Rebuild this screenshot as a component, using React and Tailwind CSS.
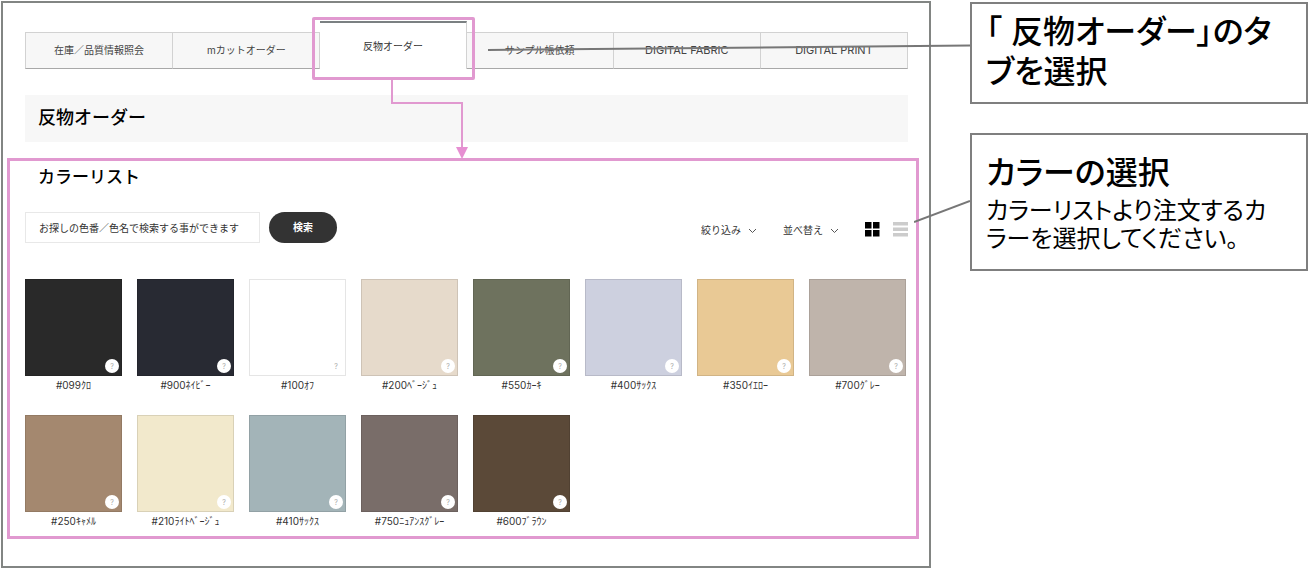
import React, { useState } from 'react';
import clsx from 'clsx';

const tabs = [
    { label: '在庫／品質情報照会' },
    { label: 'mカットオーダー' },
    { label: '反物オーダー' },
    { label: 'サンプル帳依頼' },
    { label: 'DIGITAL FABRIC', latin: true },
    { label: 'DIGITAL PRINT', latin: true },
];

const colors = [
    { name: '#099ｸﾛ', hex: '#292929' },
    { name: '#900ﾈｲﾋﾞｰ', hex: '#282a33' },
    { name: '#100ｵﾌ', hex: '#ffffff' },
    { name: '#200ﾍﾞｰｼﾞｭ', hex: '#e6dacb' },
    { name: '#550ｶｰｷ', hex: '#6e725e' },
    { name: '#400ｻｯｸｽ', hex: '#cdd0df' },
    { name: '#350ｲｴﾛｰ', hex: '#e9c995' },
    { name: '#700ｸﾞﾚｰ', hex: '#bfb4ab' },
    { name: '#250ｷｬﾒﾙ', hex: '#a4886f' },
    { name: '#210ﾗｲﾄﾍﾞｰｼﾞｭ', hex: '#f2e9cc' },
    { name: '#410ｻｯｸｽ', hex: '#a3b4b8' },
    { name: '#750ﾆｭｱﾝｽｸﾞﾚｰ', hex: '#796d69' },
    { name: '#600ﾌﾞﾗｳﾝ', hex: '#5b4938' },
];

// Moldura rosa e seta que ligam a aba ativa à lista de cores
const TabHighlight = () => (
    <>
        <span className="pointer-events-none absolute -inset-x-2 -top-1 -bottom-[11px] rounded-[2px] border-3 border-[#e199d0]" />
        <svg className="pointer-events-none absolute top-full left-1/2 z-10 mt-[11px] overflow-visible" width="80" height="80" fill="none">
            <path d="M-1 0V23H69V69" stroke="#e199d0" strokeWidth="2" />
            <path d="M63 67H75L69 79Z" fill="#e68fd2" />
        </svg>
    </>
);

const Tabs = ({ active, onSelect }) => (
    <nav className="mr-[21px] ml-[22px] flex h-12 items-end">
        {tabs.map(({ label, latin }) =>
            label === active ? (
                <div key={label} className="relative h-12 flex-1">
                    <button
                        type="button"
                        className="h-full w-full border-t-2 border-r border-t-[#7b8082] border-r-[#d2d2d2] bg-white text-[10px] text-[#333]"
                    >
                        {label}
                    </button>
                    <TabHighlight />
                </div>
            ) : (
                <button
                    key={label}
                    type="button"
                    onClick={() => onSelect(label)}
                    className={clsx(
                        'h-[37px] flex-1 border border-l-0 border-[#d2d2d2] border-b-[#a8a8a8] bg-[#f7f7f7] text-[#444] first:border-l',
                        latin ? 'text-[11px]' : 'text-[10px]'
                    )}
                >
                    {label}
                </button>
            )
        )}
    </nav>
);

const FilterSelect = ({ label }) => (
    <div className="relative w-14">
        <select aria-label={label} className="block w-full appearance-none bg-transparent text-[10px] leading-5 text-[#333]">
            <option>{label}</option>
        </select>
        <svg className="pointer-events-none absolute top-2 right-0 h-[6px] w-[9px]" viewBox="0 0 9 6" fill="none" stroke="#555">
            <path d="M1 1L4.5 4.5L8 1" />
        </svg>
    </div>
);

const Swatch = ({ color }) => (
    <li className="flex flex-col items-center">
        <div className="relative aspect-square w-full border border-black/10" style={{ backgroundColor: color.hex }}>
            <button
                type="button"
                className="absolute right-[2px] bottom-[2px] flex size-[14px] items-center justify-center rounded-full bg-white text-[7px] leading-none text-[#aaa]"
            >
                ?
            </button>
        </div>
        <span className="text-[10px] leading-[18px] whitespace-nowrap text-[#333]">{color.name}</span>
    </li>
);

export default function App() {
    const [active, setActive] = useState('反物オーダー');
    const [keyword, setKeyword] = useState('');

    return (
        <div className="flex items-start gap-[39px] bg-white pt-px pl-px font-[Inter,'Noto_Sans_CJK_JP',sans-serif]">
            <main className="min-w-0 flex-1 border-2 border-[#828583] pt-[18px] pb-[27px]">
                <Tabs active={active} onSelect={setActive} />

                <h1 className="mt-[26px] mr-[21px] ml-[22px] bg-[#f7f7f7] px-[13px] pt-[11px] pb-3 text-[18px] leading-6 font-medium text-black">
                    反物オーダー
                </h1>

                <section className="mt-4 mr-[10px] ml-1 border-3 border-[#e199d0] pt-1 pr-2 pb-[6px] pl-[15px]">
                    <h2 className="pl-[13px] text-[17px] leading-6 font-medium text-black">カラーリスト</h2>

                    <div className="mt-[23px] flex items-end justify-between">
                        <form className="flex gap-[9px]" onSubmit={(e) => e.preventDefault()}>
                            <input
                                type="text"
                                aria-label="色番／色名"
                                value={keyword}
                                onChange={(e) => setKeyword(e.target.value)}
                                placeholder="お探しの色番／色名で検索する事ができます"
                                className="h-[31px] w-[235px] border border-[#e8e8e8] px-[13px] text-[10px] text-[#333] placeholder:text-[#333]"
                            />
                            <button type="submit" className="h-[31px] w-[68px] rounded-full bg-[#333] text-[10px] font-bold text-white">
                                検索
                            </button>
                        </form>

                        <div className="flex h-[27px] items-center gap-[26px]">
                            <FilterSelect label="絞り込み" />
                            <FilterSelect label="並べ替え" />
                            <div className="flex gap-[13px]">
                                <button type="button" aria-label="グリッド表示">
                                    <svg className="size-[15px]" viewBox="0 0 15 15" fill="#000">
                                        <path d="M0 0h6.5v6.5H0zM8 0h6.5v6.5H8zM0 8h6.5v6.5H0zM8 8h6.5v6.5H8z" />
                                    </svg>
                                </button>
                                <button type="button" aria-label="リスト表示">
                                    <svg className="size-[15px]" viewBox="0 0 15 15" fill="#ccc">
                                        <path d="M0 0h15v3.5H0zM0 5.5h15V9H0zM0 11h15v3.5H0z" />
                                    </svg>
                                </button>
                            </div>
                        </div>
                    </div>

                    <ul className="mt-9 mr-[2px] grid grid-cols-8 gap-x-[15px] gap-y-[21px]">
                        {colors.map((color) => (
                            <Swatch key={color.name} color={color} />
                        ))}
                    </ul>
                </section>
            </main>

            <aside className="mt-px flex w-[338px] shrink-0 flex-col gap-[29px] font-['Liberation_Sans','Noto_Sans_CJK_JP',sans-serif] text-black [font-feature-settings:'palt']">
                <div className="relative border-2 border-[#7f7f7f] px-[14px] pt-2 pb-[10px]">
                    <svg className="pointer-events-none absolute top-10 right-full mr-[2px]" width="482" height="8" stroke="#777" strokeWidth="2">
                        <path d="M0 6L482 1.5" />
                    </svg>
                    <p className="text-[32px] leading-10 font-medium">
                        「 反物オーダー」のタ
                        <br />
                        ブを選択
                    </p>
                </div>

                <div className="relative border-2 border-[#7f7f7f] px-[14px] py-4">
                    <svg className="pointer-events-none absolute top-[65px] right-full mr-[2px]" width="56" height="24" stroke="#777" strokeWidth="2">
                        <path d="M0 22L56 1" />
                    </svg>
                    <h3 className="text-[32px] leading-11 font-medium">カラーの選択</h3>
                    <p className="mt-[2px] text-[24px] leading-7">
                        カラーリストより注文するカ
                        <br />
                        ラーを選択してください。
                    </p>
                </div>
            </aside>
        </div>
    );
}
